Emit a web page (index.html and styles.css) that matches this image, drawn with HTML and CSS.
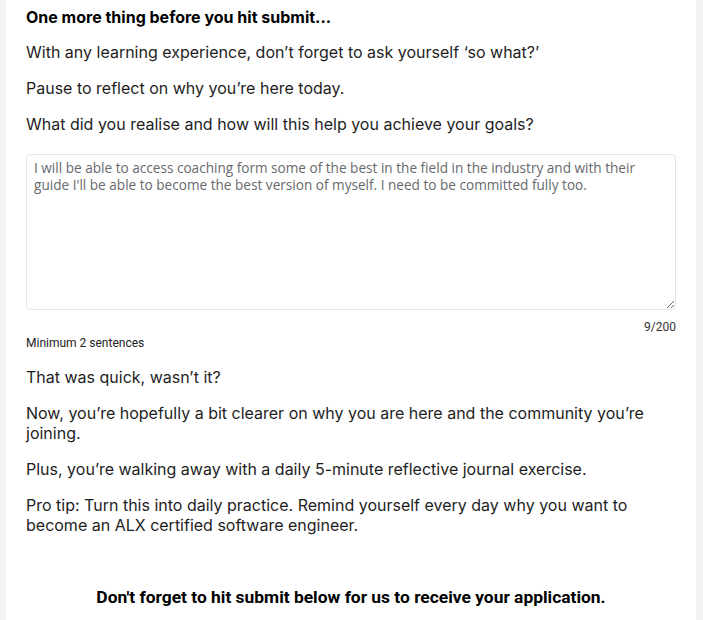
FILE: index.html
```html
<!DOCTYPE html>
<html lang="en">
<head>
<meta charset="utf-8">
<title>Reflection</title>
<link rel="stylesheet" href="styles.css">
</head>
<body>
<div class="page">
  <main class="card">
    <p class="heading">One more thing before you hit submit...</p>
    <p class="para">With any learning experience, don’t forget to ask yourself ‘so what?’</p>
    <p class="para">Pause to reflect on why you’re here today.</p>
    <p class="para">What did you realise and how will this help you achieve your goals?</p>
    <div class="field">
      <textarea class="answer">I will be able to access coaching form some of the best in the field in the industry and with their guide I'll be able to become the best version of myself. I need to be committed fully too.</textarea>
      <div class="counter">9/200</div>
      <div class="hint">Minimum 2 sentences</div>
    </div>
    <p class="para">That was quick, wasn’t it?</p>
    <p class="para">Now, you’re hopefully a bit clearer on why you are here and the community you’re joining.</p>
    <p class="para">Plus, you’re walking away with a daily 5-minute reflective journal exercise.</p>
    <p class="para">Pro tip: Turn this into daily practice. Remind yourself every day why you want to become an ALX certified software engineer.</p>
    <p class="final">Don't forget to hit submit below for us to receive your application.</p>
  </main>
</div>
</body>
</html>
```

FILE: styles.css
```css
html, body {
  margin: 0;
  padding: 0;
  background: #f2f4f3;
}
.page {
  display: flex;
  padding: 0 7px 0 6px;
  min-height: 620px;
}
.card {
  flex: 1;
  background: #ffffff;
  padding: 7px 20px 0 20px;
  font-family: Inter, "Liberation Sans", sans-serif;
  color: #1e1e1e;
  font-size: 16px;
  line-height: 20px;
}
.heading {
  margin: 0 0 15px;
  font-weight: 700;
  color: #000;
}
.para {
  margin: 0 0 16px;
}
.field {
  display: flex;
  flex-direction: column;
  margin-top: 20px;
  margin-bottom: 16px;
}
.answer {
  display: block;
  box-sizing: border-box;
  width: 100%;
  height: 156px;
  margin: 0;
  padding: 4px 7px;
  border: 1px solid #e4e6e5;
  border-radius: 4px;
  font-family: "Open Sans", sans-serif;
  font-size: 13.6px;
  line-height: 17px;
  color: #666a6e;
  resize: vertical;
  outline: none;
}
.counter {
  align-self: flex-end;
  margin-top: 9px;
  font-family: Roboto, sans-serif;
  font-size: 12px;
  line-height: 16px;
  color: #333;
}
.hint {
  font-family: Roboto, sans-serif;
  font-size: 12px;
  line-height: 16px;
  color: #222;
}
.final {
  margin: 52px 0 0;
  padding-bottom: 12px;
  text-align: center;
  font-family: Roboto, sans-serif;
  font-weight: 700;
  font-size: 17.4px;
  line-height: 20px;
  color: #000;
}
```
